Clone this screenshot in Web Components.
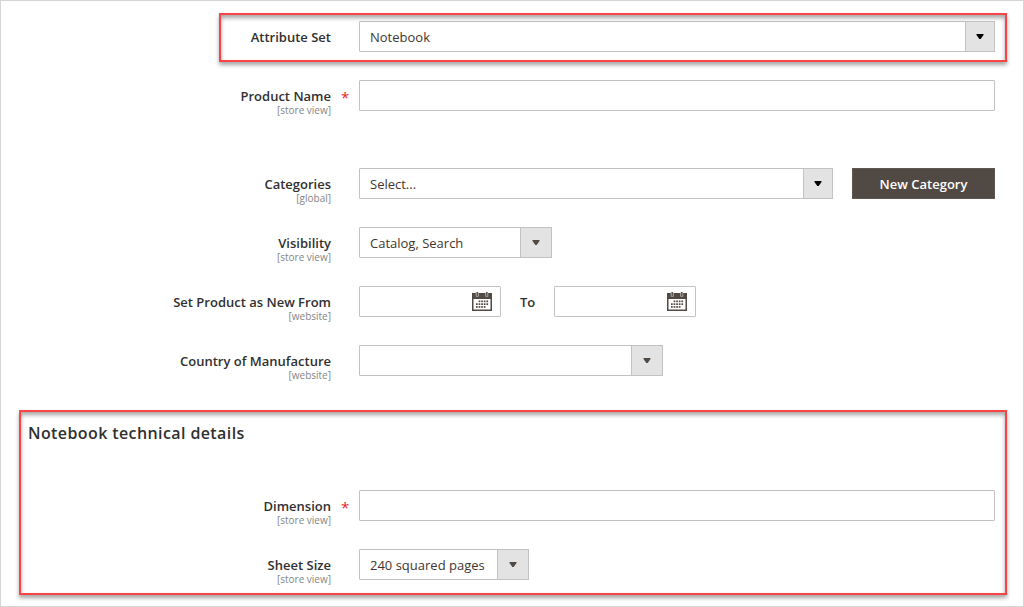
<!DOCTYPE html>
<html lang="en">
<head>
<meta charset="utf-8">
<meta name="viewport" content="width=device-width, initial-scale=1">
<title>New Product</title>
<style>
  body { margin: 0; background: #fff; font-family: "Open Sans", "Noto Sans", sans-serif; }
</style>
</head>
<body>
<product-form>
  <field-stack>
    <select-field marked dark label="Attribute Set" value="Notebook"></select-field>
    <text-field required label="Product Name" scope="[store view]"></text-field>
  </field-stack>
  <field-stack>
    <category-field dark label="Categories" scope="[global]" value="Select..."></category-field>
    <select-field size="medium" label="Visibility" scope="[store view]" value="Catalog, Search"></select-field>
    <date-range-field label="Set Product as New From" scope="[website]"></date-range-field>
    <select-field size="large" label="Country of Manufacture" scope="[website]" value=""></select-field>
  </field-stack>
  <detail-section slot="details">
    <span slot="title">Notebook technical details</span>
    <text-field required label="Dimension" scope="[store view]"></text-field>
    <select-field size="small" label="Sheet Size" scope="[store view]" value="240 squared pages"></select-field>
  </detail-section>
</product-form>

<script>
const sheet = (host, html) => { host.attachShadow({ mode: 'open' }).innerHTML = html; };

class ProductForm extends HTMLElement {
  constructor() {
    super();
    sheet(this, `
      <style>
        :host { display: block; }
        main {
          box-sizing: border-box; min-height: 100vh; border: 1px solid #d5d5d5;
          padding: 20px 16px 11px 18px;
        }
        form { margin: 0; display: flex; flex-direction: column; gap: 28px; }
        .general { display: flex; flex-direction: column; gap: 51px; padding: 0 12px 0 9px; }
      </style>
      <main><form>
        <div class="general"><slot></slot></div>
        <slot name="details"></slot>
      </form></main>`);
  }
}

class FieldStack extends HTMLElement {
  constructor() {
    super();
    sheet(this, `
      <style>:host { display: flex; flex-direction: column; gap: 22px; }</style>
      <slot></slot>`);
  }
}

class DetailSection extends HTMLElement {
  constructor() {
    super();
    sheet(this, `
      <style>
        :host {
          display: block; border: 2px solid #f94545; padding: 10px 10px 7px 7px;
          box-shadow: 0 3px 4px rgba(0,0,0,.35), inset 0 3px 4px rgba(0,0,0,.35);
        }
        h2 {
          margin: 0 0 46px; font-size: 16px; line-height: 22px; font-weight: 600;
          letter-spacing: 0.025em; color: #303030;
        }
        .rows { display: flex; flex-direction: column; gap: 22px; }
      </style>
      <h2><slot name="title"></slot></h2>
      <div class="rows"><slot></slot></div>`);
  }
}

const fieldStyles = `
  :host {
    display: grid; position: relative; align-items: start;
    grid-template-columns: 303fr 636fr; column-gap: 28px; color: #303030;
  }
  :host([marked])::before {
    content: ""; position: absolute; pointer-events: none;
    inset: -8px -12px -4px calc((100% - 28px) * 303 / 939 - 112px);
    border: 2px solid #f94545;
    box-shadow: 0 3px 4px rgba(0,0,0,.35), inset 0 3px 4px rgba(0,0,0,.35);
  }
  .caption {
    position: relative; display: block; min-height: 28px; padding: 7px 0 2px;
    text-align: right; font-size: 13px; line-height: 18px; font-weight: 600;
  }
  .scope { display: block; font-size: 10px; line-height: 10px; font-weight: 400; color: #858585; }
  :host([required]) .caption::after {
    content: "*"; position: absolute; left: calc(100% + 10px); top: 8px;
    font-size: 15px; line-height: 18px; font-weight: 400; color: #e22626;
  }
  .control { display: flex; align-items: center; min-width: 0; }
  input, select {
    box-sizing: border-box; width: 100%; height: 31px; margin: 0; min-width: 0;
    border: 1px solid #c2c2c2; border-radius: 1px; background: #fff; outline: 0;
    font: 400 13px/18px "Open Sans", "Noto Sans", sans-serif; color: #41362f; padding: 0 10px;
  }
  .picker { display: grid; grid-template-columns: minmax(0, 1fr) 32px; flex: 1; max-width: 100%; color: #514943; }
  :host([dark]) .picker { grid-template-columns: minmax(0, 1fr) 30px; color: #000; }
  :host([size="small"]) .picker { flex: 0 0 170px; }
  :host([size="medium"]) .picker { flex: 0 0 193px; }
  :host([size="large"]) .picker { flex: 0 0 304px; }
  select { appearance: none; grid-area: 1 / 1 / 2 / 3; padding-right: 32px; }
  .arrow {
    grid-area: 1 / 2; box-sizing: border-box; border: 1px solid #c2c2c2; background: #e3e3e3;
    display: grid; place-items: center; pointer-events: none; z-index: 1;
  }
`;

let serial = 0;

class AdminField extends HTMLElement {
  connectedCallback() {
    if (this.shadowRoot) return;
    this.uid = 'field-' + (++serial);
    const scope = this.getAttribute('scope');
    sheet(this, `
      <style>${fieldStyles}${this.extraStyles()}</style>
      <label class="caption" for="${this.uid}">${this.getAttribute('label')}${scope ? `<span class="scope">${scope}</span>` : ''}</label>
      <div class="control">${this.control()}</div>`);
  }
  extraStyles() { return ''; }
  picker() {
    return `<span class="picker">
      <select id="${this.uid}"><option>${this.getAttribute('value')}</option></select>
      <span class="arrow"><svg width="8" height="5" viewBox="0 0 8 5" aria-hidden="true"><path d="M.5 0h7v1L4.700 5H3.300L.5 1z" fill="currentColor"/></svg></span>
    </span>`;
  }
}

class TextField extends AdminField {
  control() { return `<input type="text" id="${this.uid}"${this.hasAttribute('required') ? ' required' : ''}>`; }
}

class SelectField extends AdminField {
  control() { return this.picker(); }
}

class CategoryField extends AdminField {
  extraStyles() {
    return `
      .control { gap: 19px; }
      button {
        flex: 0 0 143px; height: 31px; padding: 0; border: 1px solid #5f564f; background: #514943;
        color: #fff; font: 600 13px/18px "Open Sans", "Noto Sans", sans-serif;
      }`;
  }
  control() { return `${this.picker()}<button type="button">New Category</button>`; }
}

class DateRangeField extends AdminField {
  extraStyles() {
    return `
      .control { gap: 19px; }
      .date { display: grid; grid-template-columns: minmax(0, 1fr) 38px; width: 142px; align-items: center; }
      .date input { grid-area: 1 / 1 / 2 / 3; padding-right: 38px; }
      .date button {
        grid-area: 1 / 2; display: grid; place-items: center; height: 29px; padding: 0;
        border: 0; background: none; z-index: 1;
      }
      .to { font-size: 13px; line-height: 18px; font-weight: 600; }`;
  }
  date(id) {
    const dots = [];
    for (let r = 0; r < 3; r++)
      for (let c = 0; c < 5; c++)
        if (!(r === 0 && c === 0) && !(r === 2 && c === 4))
          dots.push(`<rect x="${4 + c * 2.6}" y="${8.5 + r * 2.8}" width="1.7" height="1.7"/>`);
    return `<span class="date"><input type="text" id="${id}">
      <button type="button" aria-label="Open calendar">
        <svg width="20" height="20" viewBox="0 0 20 20" fill="#514943" aria-hidden="true">
          <path fill-rule="evenodd" d="M0 1h20v18H0zM1.500 7v10.500h17V7z"/>
          <path d="M3.800 0h2.800v4.500H3.800zM13.400 0h2.800v4.500h-2.800z" fill="#d8d5d2"/>
          <path d="M4.500 0h1.400v4H4.500zM14.100 0h1.400v4h-1.400z"/>
          ${dots.join('')}
        </svg>
      </button></span>`;
  }
  control() {
    return `${this.date(this.uid)}<label class="to" for="${this.uid}-to">To</label>${this.date(this.uid + '-to')}`;
  }
}

customElements.define('product-form', ProductForm);
customElements.define('field-stack', FieldStack);
customElements.define('detail-section', DetailSection);
customElements.define('text-field', TextField);
customElements.define('select-field', SelectField);
customElements.define('category-field', CategoryField);
customElements.define('date-range-field', DateRangeField);
</script>
</body>
</html>
